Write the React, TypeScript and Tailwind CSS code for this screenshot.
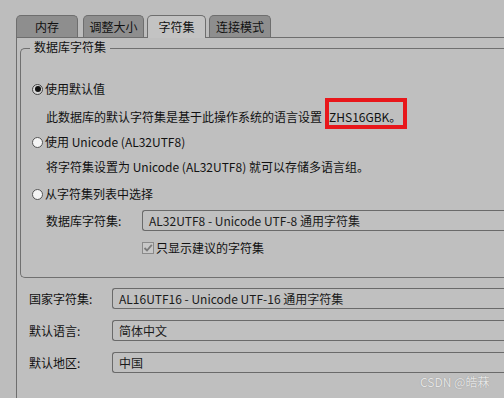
const font = { fontFamily: '"Noto Sans CJK SC", "Liberation Sans", sans-serif' };

function Tab({ label, active, width }: { label: string; active?: boolean; width: string }) {
  return (
    <div
      className={
        "flex items-center justify-center rounded-t-[5px] border border-b-0 border-[#6e6e6e] text-[12px] text-[#111] " +
        width +
        (active ? " bg-[#c3c3c3] -mb-px h-[23px] pb-px" : " bg-[#8e8e8e] h-[22px]")
      }
    >
      {label}
    </div>
  );
}

function Radio({ checked, label }: { checked?: boolean; label: string }) {
  return (
    <div className="flex items-center h-[14px]">
      <span
        className={
          "w-[11px] h-[11px] rounded-full border flex items-center justify-center " +
          (checked ? "border-[#444] bg-[#d8d8d8]" : "border-[#555] bg-[#f4f4f4]")
        }
      >
        {checked && <span className="w-[6px] h-[6px] rounded-full bg-[#111]" />}
      </span>
      <span className="ml-[2px] text-[12px] text-[#111] whitespace-nowrap">{label}</span>
    </div>
  );
}

// fields run off the right edge of the window, so no right border
function Field({ value }: { value: string }) {
  return (
    <div className="h-[21px] flex-1 min-w-0 rounded-l-[3px] border border-r-0 border-[#6a6a6a] bg-[#c0c0c0] flex items-center pl-[6px] text-[12px] text-[#1a1a1a] whitespace-nowrap overflow-hidden">
      {value}
    </div>
  );
}

function Row({ label, value }: { label: string; value: string }) {
  return (
    <div className="flex items-center">
      <span className="w-[83px] shrink-0 whitespace-nowrap text-[12px]">{label}</span>
      <Field value={value} />
    </div>
  );
}

export default function App() {
  return (
    <div
      className="relative w-[504px] h-[398px] overflow-hidden bg-[#bdbdbd] text-[#111] leading-none"
      style={font}
    >
      {/* tabs */}
      <div className="pt-[15px] pl-[16px] flex items-end">
        <Tab label="内存" width="w-[62px]" />
        <div className="ml-[5px]">
          <Tab label="调整大小" width="w-[61px]" />
        </div>
        <div className="ml-[3px]">
          <Tab label="字符集" active width="w-[59px]" />
        </div>
        <div className="ml-[3px]">
          <Tab label="连接模式" width="w-[62px]" />
        </div>
      </div>

      {/* panel */}
      <div className="ml-[16px] h-[361px] border-l border-t border-[#6e6e6e] bg-[#bfbfbf] pl-[3px] pt-[10px]">
        <div className="relative h-[230px] rounded-l-[5px] border border-r-0 border-[#707070] pl-[11px] pt-[33px]">
          <span className="absolute left-[9px] -top-[8px] px-[4px] bg-[#bfbfbf] text-[12px]">数据库字符集</span>

          <Radio checked label="使用默认值" />
          <div className="mt-[14px] ml-[14px] h-[14px] flex items-center text-[12px] whitespace-nowrap">
            <span>此数据库的默认字符集是基于此操作系统的语言设置</span>
            <span className="relative ml-[7px]">
              ZHS16GBK。
              <span className="absolute -left-[4px] -top-[13px] w-[82px] h-[31px] border-[4px] border-[#e8171b]" />
            </span>
          </div>

          <div className="mt-[11px]">
            <Radio label="使用 Unicode (AL32UTF8)" />
          </div>
          <div className="mt-[11px] ml-[14px] h-[14px] flex items-center text-[12px] whitespace-nowrap">
            将字符集设置为 Unicode (AL32UTF8) 就可以存储多语言组。
          </div>

          <div className="mt-[13px]">
            <Radio label="从字符集列表中选择" />
          </div>
          <div className="mt-[9px] ml-[14px] flex items-center">
            <span className="w-[96px] shrink-0 text-[12px]">数据库字符集:</span>
            <Field value="AL32UTF8 - Unicode UTF-8 通用字符集" />
          </div>
          <div className="mt-[11px] ml-[110px] flex items-center">
            <span className="w-[12px] h-[12px] border border-[#8a8a8a] bg-[#c8c8c8] flex items-center justify-center">
              <svg width="10" height="10" viewBox="0 0 10 10">
                <path d="M1.5 5 L4 7.5 L8.8 1.8" fill="none" stroke="#7a7a7a" strokeWidth="1.8" />
              </svg>
            </span>
            <span className="ml-[2px] text-[12px]">只显示建议的字符集</span>
          </div>
        </div>

        <div className="mt-[10px] ml-[9px] flex flex-col gap-[11px]">
          <Row label="国家字符集:" value="AL16UTF16 - Unicode UTF-16 通用字符集" />
          <Row label="默认语言:" value="简体中文" />
          <Row label="默认地区:" value="中国" />
        </div>
      </div>

      {/* watermark */}
      <div className="absolute left-[420px] top-[376px] text-[12px] text-[#e6e6e6] [text-shadow:0_0_1px_#888]">
        CSDN @皓菻
      </div>
    </div>
  );
}
